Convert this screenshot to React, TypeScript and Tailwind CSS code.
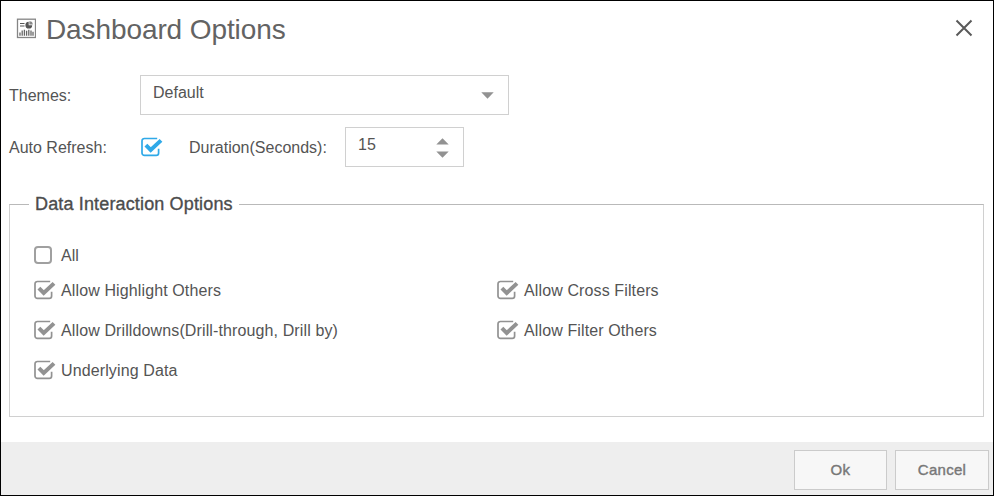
import React from "react";

const FONT = "font-['Liberation_Sans',Arial,sans-serif]";

function Check({ className }: { className: string }) {
  return (
    <svg className={`block shrink-0 ${className}`} width="22" height="20" viewBox="0 0 22 20" fill="none">
      <path
        d="M16.2 1.5H3.4A2.4 2.4 0 0 0 1 3.9V15.9A2.4 2.4 0 0 0 3.4 18.3H15.2A2.4 2.4 0 0 0 17.6 15.9V11.8"
        stroke="currentColor"
        strokeWidth="1.7"
      />
      <path d="M4.9 8.2L9.7 13L20 3.4" stroke="currentColor" strokeWidth="4" />
    </svg>
  );
}

function Option({ label }: { label: string }) {
  return (
    <label className="flex h-10 w-[463px] items-center">
      <Check className="text-[#929292]" />
      <span className="ml-[5px] mt-px whitespace-nowrap tracking-[0.12px]">{label}</span>
    </label>
  );
}

function DashboardIcon() {
  return (
    <svg className="mt-[17px] block shrink-0" width="20" height="21" viewBox="0 0 20 21" fill="none">
      <rect x="1.5" y="1.2" width="18" height="18.3" stroke="#858585" strokeWidth="1.3" />
      <path d="M4 5.5H8.5M4 8H8.5" stroke="#555" strokeWidth="1.2" />
      <path d="M12.7 3.8A3.4 3.4 0 1 0 16.2 7.2H12.7Z" fill="#555" />
      <path d="M13.3 3.2A3.4 3.4 0 0 1 16.8 6.6H13.3Z" fill="#888" />
      <path
        d="M4 17.8V14.5M6.2 17.8V12.5M8.4 17.8V11.8M10.6 17.8V12.8M12.8 17.8V11.8M15 17.8V12.5M17 17.8V13.8"
        stroke="#666"
        strokeWidth="1.3"
      />
    </svg>
  );
}

export default function App() {
  return (
    <div className={`flex h-[496px] w-[994px] flex-col border border-black bg-white text-[16px] leading-[20px] text-[#545454] ${FONT}`}>
      <header className="flex h-[74px] items-start pl-[15px] pr-[20px]">
        <DashboardIcon />
        <h1 className="ml-[10px] mt-[13px] text-[28px] leading-[32px] tracking-[-0.1px] text-[#636363]">Dashboard Options</h1>
        <svg className="ml-auto mt-[18px] block" width="18" height="18" viewBox="0 0 18 18" fill="none">
          <path d="M1.5 1.5L16.5 16.5M16.5 1.5L1.5 16.5" stroke="#5a5a5a" strokeWidth="2" />
        </svg>
      </header>

      <div className="flex h-10 items-center pl-[8px]">
        <span className="mt-px w-[131px]">Themes:</span>
        <div className="flex h-10 w-[369px] items-center justify-between border border-[#d0d0d0] pl-[12px] pr-[14px]">
          <span className="-mt-[5px]">Default</span>
          <svg width="13" height="7" viewBox="0 0 13 7" className="mt-px">
            <path d="M0.3 0.3H12.7L6.5 6.8Z" fill="#929292" />
          </svg>
        </div>
      </div>

      <div className="mt-[12px] flex h-10 items-center pl-[8px]">
        <span className="mt-px w-[132px]">Auto Refresh:</span>
        <Check className="text-[#2fa9e8]" />
        <span className="ml-[26px] mt-px w-[156px]">Duration(Seconds):</span>
        <div className="flex h-10 w-[119px] items-center justify-between border border-[#d0d0d0] pl-[12px] pr-[14px]">
          <span className="-mt-[5px]">15</span>
          <svg width="13" height="20" viewBox="0 0 13 20" className="mt-px">
            <path d="M0.3 6.5H12.7L6.5 0.2ZM0.3 13.5H12.7L6.5 19.8Z" fill="#929292" />
          </svg>
        </div>
      </div>

      <fieldset className="ml-[8px] mr-[9px] mt-[25px] h-[225px] border border-[#d0d0d0] border-t-[#b9b9b9] pl-[24px]">
        <legend className="-ml-[5px] h-[24px] px-[6px] text-[18px] leading-[24px] tracking-[0.15px] text-[#4c4c4c] [-webkit-text-stroke:0.35px_#4c4c4c]">
          Data Interaction Options
        </legend>
        <label className="mt-[29px] flex h-[20px] items-center">
          <span className="h-[18px] w-[18px] rounded-[4px] border-2 border-[#a0a0a0]" />
          <span className="ml-[9px] mt-px">All</span>
        </label>
        <div className="mt-[5px] flex flex-wrap">
          <Option label="Allow Highlight Others" />
          <Option label="Allow Cross Filters" />
          <Option label="Allow Drilldowns(Drill-through, Drill by)" />
          <Option label="Allow Filter Others" />
          <Option label="Underlying Data" />
        </div>
      </fieldset>

      <footer className="mt-auto flex h-[53px] items-start justify-end gap-[8px] bg-[#eeeeee] pr-[4px] pt-[8px] text-[15px] text-[#777] tracking-[0.3px] [-webkit-text-stroke:0.4px_#777]">
        <button className="h-10 w-[93px] border border-[#cbcbcb] bg-[#f7f7f7]">Ok</button>
        <button className="h-10 w-[94px] border border-[#cbcbcb] bg-[#f7f7f7]">Cancel</button>
      </footer>
    </div>
  );
}
